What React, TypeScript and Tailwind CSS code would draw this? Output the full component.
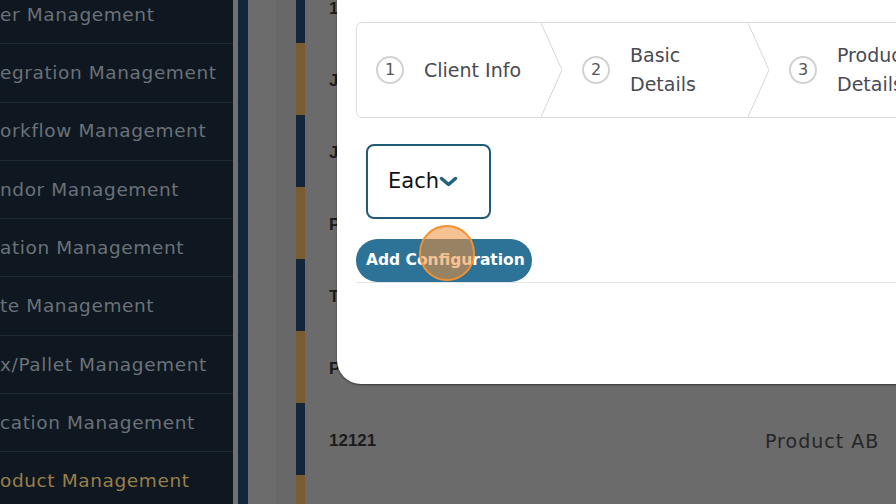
import React from 'react';

const menu = [
  { label: 'er Management' },
  { label: 'egration Management' },
  { label: 'orkflow Management' },
  { label: 'ndor Management' },
  { label: 'ation Management' },
  { label: 'te Management' },
  { label: 'x/Pallet Management' },
  { label: 'cation Management' },
  { label: 'oduct Management', active: true },
];

const rows = [
  { id: '1001', name: 'Product AA' },
  { id: 'JX-2201', name: 'Product JX' },
  { id: 'JK-4410', name: 'Product JK' },
  { id: 'PR-7781', name: 'Product PR' },
  { id: 'TX-3302', name: 'Product TX' },
  { id: 'PL-5520', name: 'Product PL' },
  { id: '12121', name: 'Product AB' },
  { id: '', name: '' },
];

const steps = [
  { n: 1, label: ['Client Info'] },
  { n: 2, label: ['Basic', 'Details'] },
  { n: 3, label: ['Product', 'Details'] },
  { n: 4, label: ['Packaging', 'Details'] },
];

function Chevron() {
  return (
    <svg width="21" height="94" viewBox="0 0 21 94" className="ml-auto shrink-0 self-stretch">
      <path d="M0 0 L21 47 L0 94" fill="none" stroke="#d6d6d6" strokeWidth="1" />
    </svg>
  );
}

export default function App() {
  return (
    <div
      className="relative w-[896px] h-[504px] overflow-hidden flex bg-[#6b6b6b]"
      style={{ fontFamily: '"DejaVu Sans", "Liberation Sans", sans-serif' }}
    >
      {/* Sidebar (dimmed by the modal backdrop) */}
      <div className="w-[233px] shrink-0 bg-[#0f1820] overflow-hidden">
        <div className="-mt-[14px]">
          {menu.map((m) => (
            <div
              key={m.label}
              className="h-[58.3px] border-b border-[#1d2832] flex items-center whitespace-nowrap text-[18.5px] tracking-[0.6px]"
            >
              <span className={m.active ? 'text-[#977f4c]' : 'text-[#6b7178]'}>{m.label}</span>
            </div>
          ))}
        </div>
      </div>
      <div className="w-[5px] shrink-0 bg-[#707070]" />
      <div className="w-[10px] shrink-0 bg-[#13263a]" />
      <div className="w-[28px] shrink-0 bg-[#6c6c6c]" />
      <div className="w-[20px] shrink-0 bg-[#686868]" />

      {/* Table rows */}
      <div className="flex-1 -mt-[29px]">
        {rows.map((r, i) => (
          <div
            key={i}
            className={`h-[72px] flex items-center border-l-[9px] pl-[24px] ${
              i % 2 === 0 ? 'border-[#13263a]' : 'border-[#7a5c33]'
            }`}
          >
            <span className="mt-[4px] w-[436px] text-[17px] font-bold text-[#1b1b1b] font-['Liberation_Sans',sans-serif]">
              {r.id}
            </span>
            <span className="mt-[4px] text-[19px] text-[#262626] tracking-[1px] whitespace-nowrap">{r.name}</span>
          </div>
        ))}
      </div>

      {/* Modal */}
      <div className="absolute left-[337px] top-[-30px] w-[600px] h-[414px] bg-white rounded-[24px] shadow-[0_1px_2px_rgba(0,0,0,0.5)] pt-[52px] pl-[19px]">
        <div className="h-[96px] border border-[#dcdcdc] rounded-md flex overflow-hidden text-[#4a4a52]">
          {steps.map((s, i) => (
            <div
              key={s.n}
              className={`flex items-center shrink-0 ${i === 0 ? 'w-[205px] pl-[19px]' : 'w-[207px] pl-[20px]'}`}
            >
              <div className="w-[28px] h-[28px] shrink-0 rounded-full border-2 border-[#d2d2d2] flex items-center justify-center text-[16px] text-[#555]">
                {s.n}
              </div>
              <div className="ml-[20px] text-[19px] leading-[29px] whitespace-nowrap">
                {s.label.map((l) => (
                  <div key={l}>{l}</div>
                ))}
              </div>
              <Chevron />
            </div>
          ))}
        </div>

        <div className="mt-[26px] ml-[10px] w-[125px] h-[75px] border-2 border-[#1f5b76] rounded-lg flex items-center pl-[20px]">
          <span className="text-[21px] text-[#111]">Each</span>
          <svg width="19" height="11" viewBox="0 0 19 11" className="-mt-[1px]">
            <path d="M2.5 2.5 L9.5 8.5 L16.5 2.5" fill="none" stroke="#1e6180" strokeWidth="3.5" strokeLinecap="round" strokeLinejoin="round" />
          </svg>
        </div>

        <button className="mt-[20px] h-[43px] w-[176px] rounded-full bg-[#2d7297] text-white font-semibold text-[15.5px] text-left pl-[10px]">
          Add Configuration
        </button>
        <div className="border-t border-[#e6e6e6]" />
      </div>

      {/* Click indicator */}
      <div className="absolute left-[419px] top-[225px] w-[56px] h-[56px] rounded-full border-2 border-[#f5922f] bg-[#f0903a]/55" />
    </div>
  );
}
